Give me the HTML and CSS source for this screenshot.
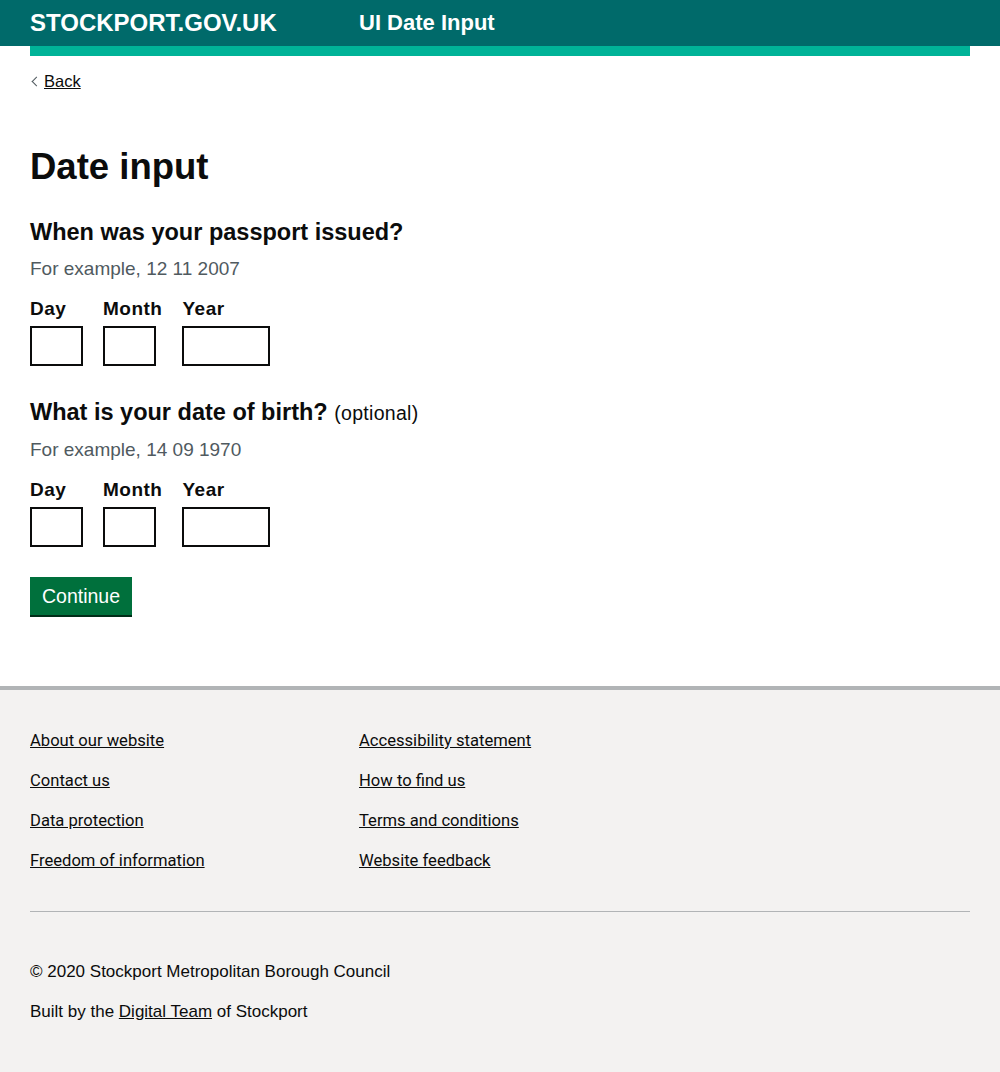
FILE: index.html
```html
<!DOCTYPE html>
<html lang="en">
<head>
<meta charset="utf-8">
<title>UI Date Input</title>
<link rel="stylesheet" href="styles.css">
</head>
<body>
<header class="header">
  <div class="header-inner">
    <a class="logo" href="#">STOCKPORT.GOV.UK</a>
    <span class="service">UI Date Input</span>
  </div>
</header>
<div class="container">
  <div class="stripe"></div>
  <a class="back" href="#">Back</a>
  <main class="main">
    <h1 class="h1">Date input</h1>
    <fieldset class="fieldset fieldset-first">
      <legend class="legend">When was your passport issued?</legend>
      <div class="hint">For example, 12 11 2007</div>
      <div class="date">
        <div class="item"><label class="label">Day</label><input class="input w2" type="text"></div>
        <div class="item"><label class="label">Month</label><input class="input w2" type="text"></div>
        <div class="item"><label class="label">Year</label><input class="input w4" type="text"></div>
      </div>
    </fieldset>
    <fieldset class="fieldset">
      <legend class="legend">What is your date of birth? <span class="optional">(optional)</span></legend>
      <div class="hint">For example, 14 09 1970</div>
      <div class="date">
        <div class="item"><label class="label">Day</label><input class="input w2" type="text"></div>
        <div class="item"><label class="label">Month</label><input class="input w2" type="text"></div>
        <div class="item"><label class="label">Year</label><input class="input w4" type="text"></div>
      </div>
    </fieldset>
    <button class="button" type="button">Continue</button>
  </main>
</div>
<footer class="footer">
  <div class="container">
    <ul class="links">
      <li><a href="#">About our website</a></li>
      <li><a href="#">Accessibility statement</a></li>
      <li><a href="#">Contact us</a></li>
      <li><a href="#">How to find us</a></li>
      <li><a href="#">Data protection</a></li>
      <li><a href="#">Terms and conditions</a></li>
      <li><a href="#">Freedom of information</a></li>
      <li><a href="#">Website feedback</a></li>
    </ul>
    <hr class="rule">
    <p class="meta">© 2020 Stockport Metropolitan Borough Council</p>
    <p class="meta">Built by the <a href="#">Digital Team</a> of Stockport</p>
  </div>
</footer>
</body>
</html>
```

FILE: styles.css
```css
* { box-sizing: border-box; }
html, body { margin: 0; padding: 0; }
body {
  font-family: "Liberation Sans", Arial, sans-serif;
  color: #0b0c0c;
  background: #fff;
}
.header { background: #006a6a; height: 46px; }
.header-inner {
  padding: 0 30px;
  display: flex;
  align-items: center;
  height: 46px;
}
.logo {
  color: #fff;
  text-decoration: none;
  font-weight: 700;
  font-size: 24px;
  width: 329px;
}
.service { color: #fff; font-weight: 700; font-size: 22px; }
.container { padding: 0 30px; }
.stripe { height: 10px; background: #00b398; }
.back {
  display: inline-block;
  margin-top: 15px;
  padding-left: 14px;
  position: relative;
  color: #0b0c0c;
  font-size: 16.5px;
  line-height: 20px;
}
.back::before {
  content: "";
  position: absolute;
  left: 3px; top: 7px;
  width: 6px; height: 6px;
  border-left: 1px solid #505a5f;
  border-bottom: 1px solid #505a5f;
  transform: rotate(45deg);
}
.main { padding-top: 56px; padding-bottom: 71px; }
.h1 { margin: 0 0 30px; font-size: 36.5px; line-height: 40px; font-weight: 700; }
.fieldset { border: 0; margin: 0 0 30px; padding: 0; min-width: 0; }
.fieldset-first { margin-bottom: 31px; }
.legend { padding: 0; font-size: 23.5px; line-height: 30px; font-weight: 700; margin-bottom: 9px; }
.optional { font-size: 19.5px; font-weight: 400; letter-spacing: 0.3px; }
.hint { color: #505a5f; font-size: 19px; line-height: 25px; margin-bottom: 15px; }
.date { display: flex; gap: 20px; }
.item { display: flex; flex-direction: column; align-items: flex-start; }
.label { font-size: 19px; font-weight: 700; line-height: 25px; margin-bottom: 5px; letter-spacing: 0.5px; }
.input { height: 40px; border: 2px solid #0b0c0c; padding: 5px; font-size: 19px; margin: 0; border-radius: 0; }
.w2 { width: 53px; }
.w4 { width: 88px; }
.button {
  background: #00703c;
  color: #fff;
  border: 0;
  font-family: inherit;
  font-size: 19.5px;
  line-height: 25px;
  padding: 7px 12px 6px;
  box-shadow: 0 2px 0 #002d18;
  height: 38px;
}
.footer { background: #f3f2f1; border-top: 4px solid #b1b4b6; padding-top: 41px; padding-bottom: 30px; }
.links {
  list-style: none;
  margin: 0; padding: 0;
  display: grid;
  grid-template-columns: 329px 1fr;
  row-gap: 20px;
  font-family: Roboto, sans-serif;
  font-size: 16.6px;
  line-height: 20px;
}
.links a, .meta a { color: #0b0c0c; }
.rule { border: 0; border-top: 1px solid #b1b4b6; margin: 40px 0 50px; }
.meta { margin: 0 0 20px; font-size: 17px; line-height: 20px; }
```
